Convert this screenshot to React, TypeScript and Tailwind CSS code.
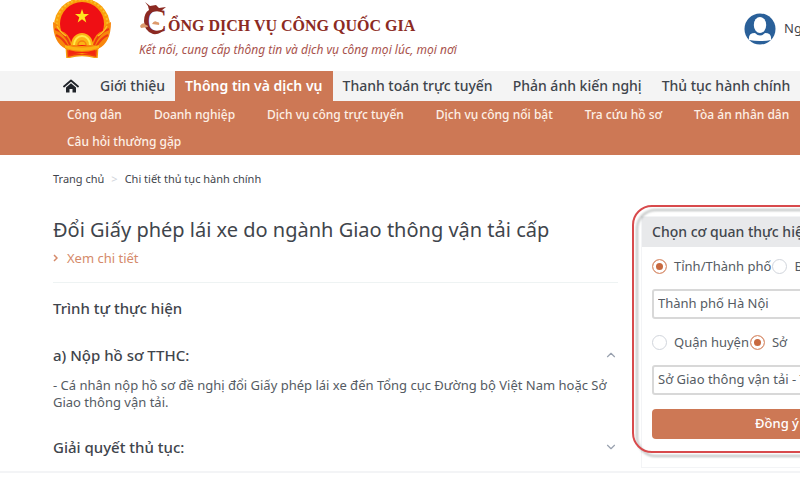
import { useState } from 'react';
import { ChevronDown, ChevronUp } from 'lucide-react';

const menu = [
  'Giới thiệu',
  'Thông tin và dịch vụ',
  'Thanh toán trực tuyến',
  'Phản ánh kiến nghị',
  'Thủ tục hành chính',
];

const subMenu = [
  'Công dân',
  'Doanh nghiệp',
  'Dịch vụ công trực tuyến',
  'Dịch vụ công nổi bật',
  'Tra cứu hồ sơ',
  'Tòa án nhân dân',
  'Câu hỏi thường gặp',
];

function Emblem() {
  return (
    <svg viewBox="0 0 60 60" className="h-[60px] w-[60px] shrink-0" aria-hidden="true">
      <path d="M14 45 L46 45 L45 60 Q30 55 15 60 Z" fill="#f2380f" stroke="#f6a010" strokeWidth="1.5" />
      <circle cx="30" cy="28" r="28" fill="#fb9f0b" />
      <circle cx="30" cy="27" r="25.500" fill="none" stroke="#f7bf2a" strokeWidth="2" strokeDasharray="2 2" />
      <circle cx="30" cy="26" r="22" fill="#ef0f14" />
      <path d="M30 11 L31.700 16.100 L37 16.100 L32.700 19.300 L34.300 24.400 L30 21.300 L25.700 24.400 L27.300 19.300 L23 16.100 L28.300 16.100 Z" fill="#ffe51f" />
      <path d="M1 24 Q8 27 9 33 Q16 34 20 46 L30 49 L40 46 Q44 34 51 33 Q52 27 59 24 Q59 45 46 51 L30 55 L14 51 Q1 45 1 24 Z" fill="#f8860c" />
      <path d="M3 31 Q13 34 18 47 M4 37 Q11 40 16 49 M57 31 Q47 34 42 47 M56 37 Q49 40 44 49" fill="none" stroke="#ee3a12" strokeWidth="2" />
      <path d="M5 28 Q8 34 14 38 M55 28 Q52 34 46 38" fill="none" stroke="#fcc421" strokeWidth="1.500" />
      <path d="M19 47 A11 12 0 0 1 41 47 Z" fill="#fbb414" />
      <path d="M22 47 A8 9 0 0 1 38 47" fill="none" stroke="#ffe94a" strokeWidth="2" />
      <path d="M26 47 A4 4 0 0 1 34 47" fill="none" stroke="#f5800f" strokeWidth="1.500" />
      <path d="M13 47 Q30 52 47 47 L47 50 Q30 56 13 50 Z" fill="#fbb414" />
      <path d="M17 52 Q30 56 43 52 L43 57 Q30 53 17 57 Z" fill="#f3260f" />
    </svg>
  );
}

function DragonInitial() {
  return (
    <span className="relative inline-block w-[29px] shrink-0 pt-px pl-[5px] font-['Liberation_Serif',serif] text-[34px] leading-10 text-[#8c2a22]">
      C
      <svg viewBox="0 0 32 36" className="absolute top-0 left-0 h-9 w-8" aria-hidden="true">
        <path d="M6 2 L11 6 L17 5 L20 8 L27 7 L22 11 L15 11 Q9 14 8 20 Q8 27 14 31 Q20 33 26 28 Q22 35 14 34 Q5 31 5 21 Q5 13 10 10 L9 6 Z" fill="#8c2a22" />
        <path d="M1 26 Q4 21 7 25 Q9 25 9 27 L2 28 Z M13 24 Q15 20 18 22 Q21 22 20 25 Z" fill="#dc9a6c" />
      </svg>
    </span>
  );
}

function HomeIcon() {
  return (
    <svg viewBox="0 0 16 16" className="h-4 w-4" aria-hidden="true">
      <path d="M1 8.500 L8 2.500 L15 8.500" fill="none" stroke="#20242a" strokeWidth="1.800" strokeLinecap="round" strokeLinejoin="round" />
      <path d="M3 9.500 L8 5.300 L13 9.500 V14.500 H9.500 V11 H6.500 V14.500 H3 Z" fill="#20242a" />
    </svg>
  );
}

function UserIcon() {
  return (
    <svg viewBox="0 0 32 32" className="h-8 w-8 shrink-0" aria-hidden="true">
      <circle cx="16" cy="16" r="15.500" fill="#2a6099" />
      <ellipse cx="16" cy="12" rx="6.200" ry="8" fill="#fff" />
      <path d="M5 27 Q4 20 11 20 Q16 25 21 20 Q28 20 27 27 Q22 28 16 28 Q10 28 5 27 Z" fill="#fff" />
    </svg>
  );
}

type RadioProps = {
  name: string;
  label: string;
  checked: boolean;
  onChange: () => void;
};

function Radio({ name, label, checked, onChange }: RadioProps) {
  return (
    <label className="flex shrink-0 items-center gap-[7px] text-[13px] leading-5 whitespace-nowrap">
      <input
        type="radio"
        name={name}
        checked={checked}
        onChange={onChange}
        className="h-[15px] w-[15px] appearance-none rounded-full border border-gray-300 bg-white checked:border-[#dd9a7b] checked:bg-[#c8693f] checked:shadow-[inset_0_0_0_3px_#fff]"
      />
      {label}
    </label>
  );
}

function AgencyCard() {
  const [level, setLevel] = useState('tinh');
  const [unit, setUnit] = useState('so');
  const selectClass =
    'h-[30px] w-full appearance-none rounded-[3px] border-2 border-[#d8d8d8] bg-white px-1 text-[13px] text-[#555b63]';

  return (
    <aside className="relative border border-gray-100">
      <h2 className="bg-[#e8e9eb] px-[10px] text-sm leading-[30px] font-medium text-[#41464d]">
        Chọn cơ quan thực hiện
      </h2>
      <form className="px-[10px] pt-[9px] pb-[28px] text-[#555b63]" onSubmit={(e) => e.preventDefault()}>
        <div className="flex gap-px">
          <Radio name="level" label="Tỉnh/Thành phố" checked={level === 'tinh'} onChange={() => setLevel('tinh')} />
          <Radio name="level" label="Bộ" checked={level === 'bo'} onChange={() => setLevel('bo')} />
        </div>
        <div className="mt-[13px]">
          <select aria-label="Tỉnh/Thành phố" className={selectClass}>
            <option>Thành phố Hà Nội</option>
          </select>
        </div>
        <div className="mt-[13px] flex gap-px">
          <Radio name="unit" label="Quận huyện" checked={unit === 'quan'} onChange={() => setUnit('quan')} />
          <Radio name="unit" label="Sở" checked={unit === 'so'} onChange={() => setUnit('so')} />
        </div>
        <div className="mt-[13px]">
          <select aria-label="Sở" className={selectClass}>
            <option>Sở Giao thông vận tải - TP Hà Nội</option>
          </select>
        </div>
        <button type="submit" className="mt-[14px] h-[30px] w-full rounded-sm bg-[#cd7855] text-[13px] font-medium text-white">
          Đồng ý
        </button>
      </form>
      <div className="pointer-events-none absolute -top-3 -right-3 bottom-[14px] -left-[10px] rounded-[20px] border-2 border-[#d84a4c] drop-shadow-[4px_4px_1px_rgba(60,70,70,0.35)]" />
    </aside>
  );
}

export default function App() {
  const [open, setOpen] = useState(true);

  return (
    <div className="min-h-screen overflow-hidden bg-white font-['Noto_Sans',sans-serif] text-[#3f454c]">
      <header className="flex h-[71px] items-start">
        <div className="-mt-[2px] pl-[52px]">
          <Emblem />
        </div>
        <div className="pl-[27px]">
          <div className="flex h-[41px] items-start text-[#8c2a22]">
            <DragonInitial />
            <span className="pt-3 font-['Liberation_Serif',serif] text-base leading-7 font-bold whitespace-nowrap">
              ỔNG DỊCH VỤ CÔNG QUỐC GIA
            </span>
          </div>
          <p className="text-xs leading-[18px] whitespace-nowrap text-[#a8524c] italic">
            Kết nối, cung cấp thông tin và dịch vụ công mọi lúc, mọi nơi
          </p>
        </div>
        <a href="#" className="mt-[13px] ml-auto flex items-center gap-2 text-[13px]">
          <UserIcon />
          <span className="w-4 whitespace-nowrap">Ng</span>
        </a>
      </header>

      <nav className="flex h-[30px] items-center bg-[#f4f4f4] pl-[63px] text-sm font-medium whitespace-nowrap">
        <a href="#" aria-label="Trang chủ" className="mr-[11px]">
          <HomeIcon />
        </a>
        {menu.map((item) => (
          <a
            key={item}
            href="#"
            className={
              item === 'Thông tin và dịch vụ'
                ? 'bg-[#cd7855] px-[10px] leading-[30px] font-semibold text-white'
                : 'px-[10px] leading-[30px]'
            }
          >
            {item}
          </a>
        ))}
      </nav>
      <nav className="flex flex-wrap gap-x-8 bg-[#cd7855] pl-[67px] text-xs leading-[27px] font-medium whitespace-nowrap text-[#fdf0e6]">
        {subMenu.map((item) => (
          <a key={item} href="#">
            {item}
          </a>
        ))}
      </nav>

      <div className="border-b-2 border-gray-100 pl-[53px]">
        <div className="flex gap-[7px] pt-[15px] text-[11px] leading-[18px]">
          <a href="#">Trang chủ</a>
          <span className="text-gray-300">&gt;</span>
          <a href="#">Chi tiết thủ tục hành chính</a>
        </div>

        <div className="-mr-[113px] grid grid-cols-[minmax(0,1fr)_272px] items-start gap-[23px]">
          <main>
            <div className="border-b border-[#eef3f3] pt-[27px] pb-[14px]">
              <h1 className="text-xl leading-[30px] font-normal whitespace-nowrap">
                Đổi Giấy phép lái xe do ngành Giao thông vận tải cấp
              </h1>
              <a href="#" className="mt-[3px] flex items-center gap-[9px] text-[13px] leading-5 text-[#d58a6a]">
                <svg viewBox="0 0 5 8" className="h-2 w-[5px]" aria-hidden="true">
                  <path d="M1 1 L4 4 L1 7" fill="none" stroke="currentColor" strokeWidth="1.500" />
                </svg>
                Xem chi tiết
              </a>
            </div>
            <h2 className="mt-[13px] text-[15px] leading-6 font-medium">Trình tự thực hiện</h2>
            <button
              type="button"
              onClick={() => setOpen(!open)}
              className="mt-[23px] flex w-full items-center justify-between text-[15px] leading-6 font-medium"
            >
              a) Nộp hồ sơ TTHC:
              {open ? <ChevronUp size={14} className="text-gray-400" /> : <ChevronDown size={14} className="text-gray-400" />}
            </button>
            {open && (
              <p className="mt-[10px] text-[13px] leading-[17px] text-[#555b63]">
                - Cá nhân nộp hồ sơ đề nghị đổi Giấy phép lái xe đến Tổng cục Đường bộ Việt Nam hoặc Sở Giao thông vận tải.
              </p>
            )}
            <button
              type="button"
              className="mt-[24px] mb-3 flex w-full items-center justify-between text-[15px] leading-6 font-medium"
            >
              Giải quyết thủ tục:
              <ChevronDown size={14} className="text-gray-400" />
            </button>
          </main>
          <div className="pt-7">
            <AgencyCard />
          </div>
        </div>
      </div>
    </div>
  );
}
